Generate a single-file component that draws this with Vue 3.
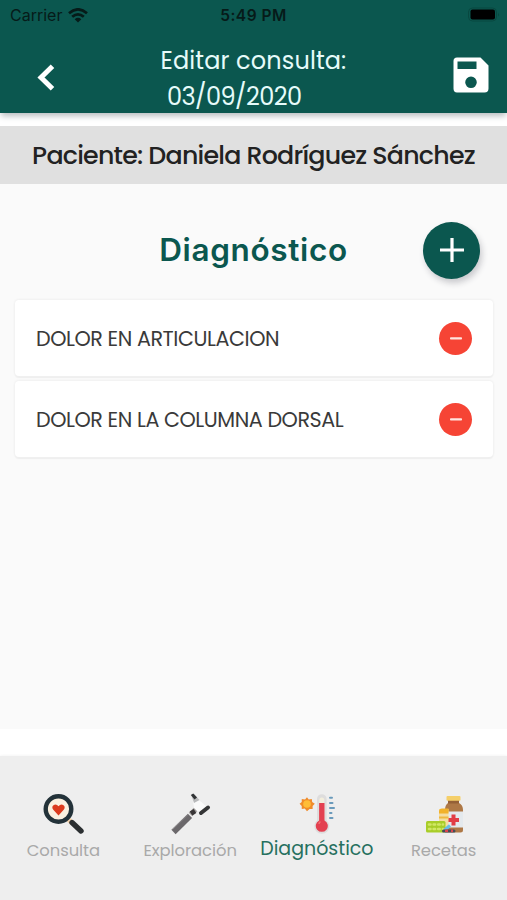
<script setup>
import { ref } from 'vue'

const paciente = 'Daniela Rodríguez Sánchez'
const fecha = '03/09/2020'
const tab = ref('diagnostico')

const diagnosticos = ref([
  { id: 1, nombre: 'DOLOR EN ARTICULACION' },
  { id: 2, nombre: 'DOLOR EN LA COLUMNA DORSAL' },
])

const tabs = [
  { id: 'consulta', label: 'Consulta' },
  { id: 'exploracion', label: 'Exploración' },
  { id: 'diagnostico', label: 'Diagnóstico' },
  { id: 'recetas', label: 'Recetas' },
]

const quitar = (id) => {
  diagnosticos.value = diagnosticos.value.filter((d) => d.id !== id)
}
</script>

<template>
  <div class="screen">
    <header class="app-header">
      <div class="status-bar">
        <div class="carrier">
          <span class="carrier-name">Carrier</span>
          <svg width="20" height="15" viewBox="0 0 20 15">
            <g fill="none" stroke="#061b19" stroke-width="2.7">
              <path d="M1 5.3Q10-2.6 19 5.3" />
              <path d="M4.2 8.8Q10 3.8 15.8 8.8" />
            </g>
            <path d="M6.7 11.2Q10 8.3 13.3 11.2L10 14.6Z" fill="#061b19" />
          </svg>
        </div>
        <span class="time">5:49 PM</span>
        <svg class="battery" width="34" height="16" viewBox="0 0 34 16">
          <rect x=".5" y="1" width="28" height="13" rx="4" fill="none" stroke="#084840" />
          <rect x="2.5" y="2.5" width="24.5" height="10" rx="2" fill="#000" />
          <path d="M30 5.5v4q1.8-2 0-4" fill="#084840" />
        </svg>
      </div>
      <div class="toolbar">
        <button class="back">
          <svg width="20" height="30" viewBox="0 0 20 30">
            <path d="M17.5 3.2L6 14.5L17.5 25.8" fill="none" stroke="#fff" stroke-width="5" />
          </svg>
        </button>
        <div class="title">
          <span class="title-text">Editar consulta:</span>
          <span class="title-date">{{ fecha }}</span>
        </div>
        <button class="save">
          <svg width="36" height="36" viewBox="0 0 36 36">
            <path fill="#fff" fill-rule="evenodd" d="M4 .5H27.5L35.5 8.5V31.5Q35.5 35.5 31.5 35.5H4Q.5 35.5 .5 31.5V4Q.5 .5 4 .5ZM4.5 4.5V12H23.5V4.5ZM18 19.5A5.8 5.8 0 1 0 18 31.1A5.8 5.8 0 1 0 18 19.5Z" />
          </svg>
        </button>
      </div>
    </header>

    <div class="paciente"><span>Paciente: {{ paciente }}</span></div>

    <main class="content">
      <div class="section-head">
        <h2>Diagnóstico</h2>
        <button class="add">
          <svg width="24" height="24" viewBox="0 0 24 24">
            <path d="M12 0v24M0 12h24" stroke="#fff" stroke-width="3.2" />
          </svg>
        </button>
      </div>
      <ul class="list">
        <li v-for="d in diagnosticos" :key="d.id" class="card">
          <span class="nombre">{{ d.nombre }}</span>
          <button class="remove" @click="quitar(d.id)">
            <svg width="12" height="3" viewBox="0 0 12 3">
              <rect y=".2" width="12" height="2.4" rx=".8" fill="#ffe4df" />
            </svg>
          </button>
        </li>
      </ul>
    </main>

    <nav class="tabs">
      <button v-for="t in tabs" :key="t.id" :class="['tab', { active: tab === t.id }]" @click="tab = t.id">
        <!-- lupa con corazón -->
        <svg v-if="t.id === 'consulta'" width="42" height="42" viewBox="0 0 42 42">
          <path d="M25.5 25.5L30 30" stroke="#f3d3ae" stroke-width="5" />
          <path d="M30 29.5L39 38" stroke="#2b2f31" stroke-width="5.4" stroke-linecap="round" />
          <circle cx="16.5" cy="16" r="12.8" fill="#fbf0df" stroke="#233239" stroke-width="4.4" />
          <path d="M16.5 22.5L11.3 16.8Q9.1 13.6 11.8 11.9Q14.5 10.7 16.5 13.3Q18.5 10.7 21.2 11.9Q23.9 13.6 21.7 16.8Z" fill="#dc3b1d" />
        </svg>
        <!-- martillo de reflejos -->
        <svg v-else-if="t.id === 'exploracion'" width="42" height="42" viewBox="0 0 42 42">
          <path d="M22 21L32 11" stroke="#fff" stroke-width="5" />
          <path d="M24 8L30 7L38 14L32 20L25 15Z" fill="#fafafa" />
          <path d="M4.5 39L21 22.8" stroke="#6b686b" stroke-width="6" />
          <path d="M3.5 36.5L19 21.5" stroke="#8c898b" stroke-width="1" />
          <path d="M21.5 21.5L26.5 16.5" stroke="#a29f9e" stroke-width="5" />
          <path d="M22 20.5L26 18" stroke="#383536" stroke-width="5" />
          <path d="M22.5 2.5L25 1L30.5 7L25 10Z" fill="#b9babb" />
          <path d="M21.8 2L24.3 .5L28 4.5L25.5 6.5Z" fill="#303334" />
          <path d="M32 20L39 14.5" stroke="#343536" stroke-width="4" stroke-linecap="round" />
        </svg>
        <!-- termómetro -->
        <svg v-else-if="t.id === 'diagnostico'" width="42" height="42" viewBox="0 0 42 42">
          <path d="M11 3L13 5.5L16.5 5L17 8.5L20 10.5L17.5 13L17.5 16.5L14 16.5L11 19L8.5 16L5 16.5L5 13L2.5 10.5L5 8.5L5 5L8.8 5.5Z" transform="translate(1.4 1.6) scale(.87)" fill="#f08c2b" />
          <circle cx="11" cy="11" r="3.8" fill="#ffbd38" />
          <path d="M21 6A4.8 4.8 0 0 1 30.6 6V27.5A7.5 7.5 0 1 1 21 27.5Z" fill="#dedddd" />
          <path d="M23.3 7A2.5 2.5 0 0 1 28.3 7V26H23.3Z" fill="#f3eedc" />
          <path d="M23.1 10H28.5V27.5A6 6 0 1 1 23.1 27.5Z" fill="#e34050" />
          <path d="M23 31Q23.1 29.2 24.5 28.8" fill="none" stroke="#f16e70" stroke-width="1.5" />
          <path d="M34 4.8H36M34 10H36.5M34 15H38M34 20H35.5M34 25H36.5" stroke="#6a9abb" stroke-width="2" stroke-linecap="round" />
        </svg>
        <!-- frasco y pastillas -->
        <svg v-else width="42" height="42" viewBox="0 0 42 42">
          <path d="M25 5H36V10Q40 12 40 17V37Q40 39.5 37.5 39.5H22V17Q22 12 25 10Z" fill="#ae7846" />
          <path d="M25 6H36V10.5H25Z" fill="#956137" />
          <rect x="23.5" y="3" width="14" height="4.8" rx="1" fill="#f5cf69" />
          <path d="M23 18.5H40V34.5H23Z" fill="#e4e9ed" />
          <path d="M30.5 21.5V32.5M25 27H36" stroke="#e23d45" stroke-width="4" />
          <rect x="16" y="16" width="9.5" height="18" fill="#f5dda0" />
          <path d="M16 18.5Q16 15.5 19 15.5H25.5V20.5H16Z" fill="#f2b22b" />
          <path d="M16 24.5H25.5" stroke="#efb841" stroke-width="2" />
          <rect x="3" y="28" width="19.5" height="11.5" rx="1.5" fill="#a8cd28" />
          <path d="M6 31.5H20M6 36H20" stroke="#d1e765" stroke-width="2.6" stroke-linecap="round" stroke-dasharray="1.5 3.1" />
          <path d="M21.5 37L27 32.5" stroke="#68bee6" stroke-width="3.2" />
          <path d="M20.5 38H31" stroke="#454d58" stroke-width="3" stroke-linecap="round" />
          <path d="M22 37.8H25M28 37.8H30" stroke="#df434c" stroke-width="2.4" />
        </svg>
        <span class="tab-label">{{ t.label }}</span>
      </button>
    </nav>
  </div>
</template>

<style>
body { margin: 0; background: #fff; }
</style>

<style scoped>
.screen {
  width: 507px;
  height: 900px;
  display: flex;
  flex-direction: column;
  overflow: hidden;
  background: #fff;
  font-family: Poppins, Inter, "Noto Sans", sans-serif;
}
button {
  border: 0;
  padding: 0;
  background: none;
  font: inherit;
}
svg { display: block; flex: none; }
span { white-space: nowrap; }
.app-header {
  height: 112.5px;
  flex: none;
  background: #0b574f;
  box-shadow: 0 4px 6px -1px #b9bec0;
}
.status-bar {
  height: 30px;
  display: grid;
  grid-template-columns: 1fr auto 1fr;
  align-items: center;
  padding: 0 5px 0 10px;
  color: #061b19;
  font-family: Inter, sans-serif;
}
.carrier { display: flex; align-items: center; gap: 6px; font-size: 16px; }
.time { margin-right: 5px; font-size: 15.5px; font-weight: 600; letter-spacing: .5px; }
.battery { justify-self: end; margin-bottom: 1px; }
.toolbar {
  height: 82px;
  display: flex;
  align-items: center;
  justify-content: space-between;
  padding: 0 18px 0 35px;
}
.back { margin-top: 14px; }
.save { margin-top: 7px; }
.title {
  display: flex;
  flex-direction: column;
  align-items: flex-start;
  margin: 15px 0 0 3px;
  width: 190px;
  line-height: 36px;
  font-size: 24px;
  color: #e6fbfa;
}
.title-text { letter-spacing: .12px; }
.title-date { padding-left: 6.5px; letter-spacing: -.55px; }
.paciente {
  height: 58px;
  flex: none;
  margin-top: 13.5px;
  display: flex;
  align-items: center;
  justify-content: center;
  background: #e0e0e0;
  color: #222;
  font-size: 25.3px;
  font-weight: 500;
  letter-spacing: -.76px;
}
.content {
  height: 545px;
  flex: none;
  background: #fafafa;
}
.section-head {
  height: 116px;
  display: grid;
  grid-template-columns: 1fr auto 1fr;
  align-items: center;
  padding: 16px 27px 0;
  box-sizing: border-box;
}
h2 {
  grid-column: 2;
  margin: 0 0 2px;
  color: #0b574f;
  font-family: Inter, sans-serif;
  font-size: 31.5px;
  font-weight: 600;
  letter-spacing: .65px;
}
.add {
  width: 57px;
  height: 57px;
  justify-self: end;
  display: grid;
  place-items: center;
  border-radius: 50%;
  background: #0b574f;
  box-shadow: 2px 4px 6px #c9c9cd;
}
.list {
  list-style: none;
  margin: 0;
  padding: 0 14px 0 15px;
  display: flex;
  flex-direction: column;
  gap: 5px;
}
.card {
  height: 76px;
  display: flex;
  align-items: center;
  justify-content: space-between;
  box-sizing: border-box;
  padding: 0 21px;
  background: #fff;
  border-radius: 4px;
  box-shadow: 0 0 2px 1px #f0f0f0, 0 2px 1px #eee;
}
.nombre { font-size: 20.7px; color: #3a3a3a; letter-spacing: -.44px; }
.remove {
  width: 33px;
  height: 33px;
  display: grid;
  place-items: center;
  border-radius: 50%;
  background: #f64435;
}
.tabs {
  height: 144px;
  flex: none;
  margin-top: auto;
  display: grid;
  grid-template-columns: repeat(4, 126.75px);
  background: #eee;
  box-shadow: 0 0 3px #eee;
}
.tab {
  display: flex;
  flex-direction: column;
  align-items: center;
  padding-top: 37px;
  color: #a9a9a9;
  font-size: 16.4px;
}
.tab-label { line-height: 24px; margin-top: 4px; letter-spacing: -.05px; }
.tab.active { color: #26705f; font-size: 19px; }
.tab.active .tab-label { margin-top: 2px; letter-spacing: 0; }
</style>
